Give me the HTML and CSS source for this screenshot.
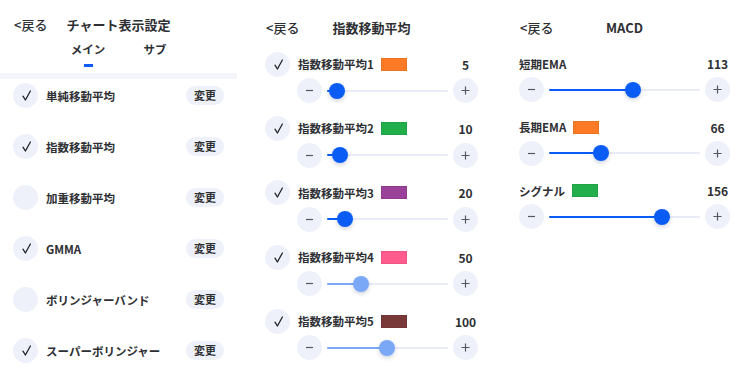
FILE: index.html
```html
<!DOCTYPE html>
<html lang="ja">
<head>
<meta charset="utf-8">
<title>チャート表示設定</title>
<link rel="stylesheet" href="styles.css">
</head>
<body>
<div class="screens">
  <section class="panel panel-main">
    <header class="head"><span class="back">&lt;戻る</span><h1 class="title">チャート表示設定</h1><span></span></header>
    <nav class="tabs">
      <div class="tab active"><span>メイン</span><i class="bar"></i></div>
      <div class="tab"><span>サブ</span><i class="bar"></i></div>
    </nav>
    <div class="band"></div>
    <ul class="list">
      <li class="item"><span class="check"><svg width="9" height="11" viewBox="0 0 9 11"><path d="M1 6.2 L3.4 10 L8.4 1"/></svg></span><span class="item-label">単純移動平均</span><span class="pill">変更</span></li>
      <li class="item"><span class="check"><svg width="9" height="11" viewBox="0 0 9 11"><path d="M1 6.2 L3.4 10 L8.4 1"/></svg></span><span class="item-label">指数移動平均</span><span class="pill">変更</span></li>
      <li class="item"><span class="check"></span><span class="item-label">加重移動平均</span><span class="pill">変更</span></li>
      <li class="item"><span class="check"><svg width="9" height="11" viewBox="0 0 9 11"><path d="M1 6.2 L3.4 10 L8.4 1"/></svg></span><span class="item-label">GMMA</span><span class="pill">変更</span></li>
      <li class="item"><span class="check"></span><span class="item-label">ボリンジャーバンド</span><span class="pill">変更</span></li>
      <li class="item"><span class="check"><svg width="9" height="11" viewBox="0 0 9 11"><path d="M1 6.2 L3.4 10 L8.4 1"/></svg></span><span class="item-label">スーパーボリンジャー</span><span class="pill">変更</span></li>
    </ul>
  </section>

  <section class="panel panel-ema">
    <header class="head"><span class="back">&lt;戻る</span><h1 class="title">指数移動平均</h1><span></span></header>
    <div class="groups">
      <div class="group">
        <div class="row-head"><span class="check"><svg width="9" height="11" viewBox="0 0 9 11"><path d="M1 6.2 L3.4 10 L8.4 1"/></svg></span><span class="row-label">指数移動平均1</span><span class="swatch sw-orange"></span><span class="value">5</span></div>
        <div class="slider"><span class="round"><svg width="9" height="9" viewBox="0 0 9 9"><path d="M1 4.5 H8"/></svg></span><div class="track" style="--f:0.0201"><span class="fill"></span><span class="thumb"></span></div><span class="round"><svg width="9" height="9" viewBox="0 0 9 9"><path d="M0.5 4.5 H8.5 M4.5 0.5 V8.5"/></svg></span></div>
      </div>
      <div class="group">
        <div class="row-head"><span class="check"><svg width="9" height="11" viewBox="0 0 9 11"><path d="M1 6.2 L3.4 10 L8.4 1"/></svg></span><span class="row-label">指数移動平均2</span><span class="swatch sw-green"></span><span class="value">10</span></div>
        <div class="slider"><span class="round"><svg width="9" height="9" viewBox="0 0 9 9"><path d="M1 4.5 H8"/></svg></span><div class="track" style="--f:0.0452"><span class="fill"></span><span class="thumb"></span></div><span class="round"><svg width="9" height="9" viewBox="0 0 9 9"><path d="M0.5 4.5 H8.5 M4.5 0.5 V8.5"/></svg></span></div>
      </div>
      <div class="group">
        <div class="row-head"><span class="check"><svg width="9" height="11" viewBox="0 0 9 11"><path d="M1 6.2 L3.4 10 L8.4 1"/></svg></span><span class="row-label">指数移動平均3</span><span class="swatch sw-purple"></span><span class="value">20</span></div>
        <div class="slider"><span class="round"><svg width="9" height="9" viewBox="0 0 9 9"><path d="M1 4.5 H8"/></svg></span><div class="track" style="--f:0.0955"><span class="fill"></span><span class="thumb"></span></div><span class="round"><svg width="9" height="9" viewBox="0 0 9 9"><path d="M0.5 4.5 H8.5 M4.5 0.5 V8.5"/></svg></span></div>
      </div>
      <div class="group">
        <div class="row-head"><span class="check"><svg width="9" height="11" viewBox="0 0 9 11"><path d="M1 6.2 L3.4 10 L8.4 1"/></svg></span><span class="row-label">指数移動平均4</span><span class="swatch sw-pink"></span><span class="value">50</span></div>
        <div class="slider"><span class="round"><svg width="9" height="9" viewBox="0 0 9 9"><path d="M1 4.5 H8"/></svg></span><div class="track track-light" style="--f:0.2462"><span class="fill"></span><span class="thumb"></span></div><span class="round"><svg width="9" height="9" viewBox="0 0 9 9"><path d="M0.5 4.5 H8.5 M4.5 0.5 V8.5"/></svg></span></div>
      </div>
      <div class="group">
        <div class="row-head"><span class="check"><svg width="9" height="11" viewBox="0 0 9 11"><path d="M1 6.2 L3.4 10 L8.4 1"/></svg></span><span class="row-label">指数移動平均5</span><span class="swatch sw-brown"></span><span class="value">100</span></div>
        <div class="slider"><span class="round"><svg width="9" height="9" viewBox="0 0 9 9"><path d="M1 4.5 H8"/></svg></span><div class="track track-light" style="--f:0.4975"><span class="fill"></span><span class="thumb"></span></div><span class="round"><svg width="9" height="9" viewBox="0 0 9 9"><path d="M0.5 4.5 H8.5 M4.5 0.5 V8.5"/></svg></span></div>
      </div>
    </div>
  </section>

  <section class="panel panel-macd">
    <header class="head"><span class="back">&lt;戻る</span><h1 class="title">MACD</h1><span></span></header>
    <div class="groups">
      <div class="group">
        <div class="row-head"><span class="row-label">短期EMA</span><span class="value">113</span></div>
        <div class="slider"><span class="round"><svg width="9" height="9" viewBox="0 0 9 9"><path d="M1 4.5 H8"/></svg></span><div class="track" style="--f:0.5628"><span class="fill"></span><span class="thumb"></span></div><span class="round"><svg width="9" height="9" viewBox="0 0 9 9"><path d="M0.5 4.5 H8.5 M4.5 0.5 V8.5"/></svg></span></div>
      </div>
      <div class="group">
        <div class="row-head"><span class="row-label">長期EMA</span><span class="swatch sw-orange"></span><span class="value">66</span></div>
        <div class="slider"><span class="round"><svg width="9" height="9" viewBox="0 0 9 9"><path d="M1 4.5 H8"/></svg></span><div class="track" style="--f:0.3266"><span class="fill"></span><span class="thumb"></span></div><span class="round"><svg width="9" height="9" viewBox="0 0 9 9"><path d="M0.5 4.5 H8.5 M4.5 0.5 V8.5"/></svg></span></div>
      </div>
      <div class="group">
        <div class="row-head"><span class="row-label">シグナル</span><span class="swatch sw-green"></span><span class="value">156</span></div>
        <div class="slider"><span class="round"><svg width="9" height="9" viewBox="0 0 9 9"><path d="M1 4.5 H8"/></svg></span><div class="track" style="--f:0.7789"><span class="fill"></span><span class="thumb"></span></div><span class="round"><svg width="9" height="9" viewBox="0 0 9 9"><path d="M0.5 4.5 H8.5 M4.5 0.5 V8.5"/></svg></span></div>
      </div>
    </div>
  </section>
</div>
</body>
</html>
```

FILE: styles.css
```css
* {
  box-sizing: border-box;
  margin: 0;
  padding: 0;
}

body {
  margin: 0;
  width: 743px;
  height: 374px;
  overflow: hidden;
  background: #ffffff;
  color: #2e2f33;
  font-family: "Noto Sans CJK JP", "Noto Sans", sans-serif;
}

.screens {
  display: flex;
  gap: 15px;
}

.panel-main {
  width: 237px;
  flex: none;
}

.panel-ema {
  width: 239px;
  flex: none;
  padding: 0 13px;
}

.panel-macd {
  width: 237px;
  flex: none;
  padding: 0 13px;
}

/* header */
.head {
  display: grid;
  grid-template-columns: 1fr auto 1fr;
  align-items: center;
  height: 22px;
  line-height: 22px;
  margin-top: 17px;
}

.panel-main .head {
  margin-top: 14px;
  padding: 0 13px;
}

.back {
  justify-self: start;
  font-size: 13px;
  font-weight: 500;
  margin-left: 1px;
}

.title {
  font-size: 13px;
  font-weight: 700;
}

/* tabs */
.tabs {
  display: flex;
  justify-content: center;
  padding-left: 6px;
  margin-top: 4px;
}

.tab {
  width: 67px;
  display: flex;
  flex-direction: column;
  align-items: center;
  font-size: 11.5px;
  font-weight: 700;
  line-height: 19px;
}

.bar {
  display: block;
  width: 9px;
  height: 3px;
  margin-top: 5px;
  background: transparent;
}

.tab.active .bar {
  background: #0a5cf5;
}

.band {
  height: 6px;
  margin-top: 6px;
  background: #f3f5fb;
}

/* list */
.list {
  list-style: none;
  display: flex;
  flex-direction: column;
  gap: 26px;
  padding: 4px 13px 0;
}

.item {
  display: flex;
  align-items: center;
  height: 25px;
}

.check,
.round {
  width: 25px;
  height: 25px;
  flex: none;
  border-radius: 50%;
  background: #eef1f9;
  display: flex;
  align-items: center;
  justify-content: center;
}

.check svg path {
  fill: none;
  stroke: #222327;
  stroke-width: 1.3;
  stroke-linecap: round;
  stroke-linejoin: round;
}

.check svg {
  margin-left: 1px;
}

.round svg path {
  fill: none;
  stroke: #55575e;
  stroke-width: 1.2;
}

.item-label {
  flex: 1;
  margin-left: 8px;
  font-size: 11.5px;
  font-weight: 700;
}

.pill {
  width: 38px;
  height: 19px;
  flex: none;
  border-radius: 10px;
  background: #eef1f9;
  font-size: 11px;
  font-weight: 700;
  line-height: 19px;
  text-align: center;
}

/* slider groups */
.groups {
  display: flex;
  flex-direction: column;
  gap: 12.7px;
  margin-top: 12.7px;
}

.panel-macd .groups {
  gap: 12.5px;
  margin-top: 12.3px;
}

.row-head {
  display: flex;
  align-items: center;
  height: 25px;
}

.row-label {
  font-size: 11.5px;
  font-weight: 700;
}

.check + .row-label {
  margin-left: 8px;
}

.swatch {
  width: 26px;
  height: 13px;
  margin-left: 7px;
  box-shadow: inset 0 0 0 1px rgba(0, 0, 0, 0.07);
}

.sw-orange { background: #fd7b24; }
.sw-green { background: #22ae4a; }
.sw-purple { background: #9a4199; }
.sw-pink { background: #ff5c8e; }
.sw-brown { background: #7a3939; }

.value {
  margin-left: auto;
  width: 25px;
  text-align: center;
  font-size: 12px;
  font-weight: 700;
  white-space: nowrap;
}

.slider {
  display: flex;
  align-items: center;
  height: 25px;
  margin-top: 1.6px;
}

.panel-ema .slider {
  padding-left: 32px;
}

.panel-macd .slider {
  margin-top: 1px;
}

.track {
  position: relative;
  flex: 1;
  height: 16px;
  margin: 0 5px;
}

.track::before {
  content: "";
  position: absolute;
  left: 0;
  right: 0;
  top: 7px;
  height: 2px;
  border-radius: 1px;
  background: #e9ecf6;
}

.fill {
  position: absolute;
  left: 0;
  top: 7px;
  height: 2px;
  border-radius: 1px;
  background: #0a5cf5;
  width: calc(var(--f) * (100% - 16px) + 8px);
}

.thumb {
  position: absolute;
  top: 0;
  left: calc(var(--f) * (100% - 16px));
  width: 16px;
  height: 16px;
  border-radius: 50%;
  background: #0a5cf5;
  box-shadow: 0 2px 4px rgba(20, 40, 90, 0.2);
}

.track-light .fill,
.track-light .thumb {
  background: #7aa8f6;
}
```
